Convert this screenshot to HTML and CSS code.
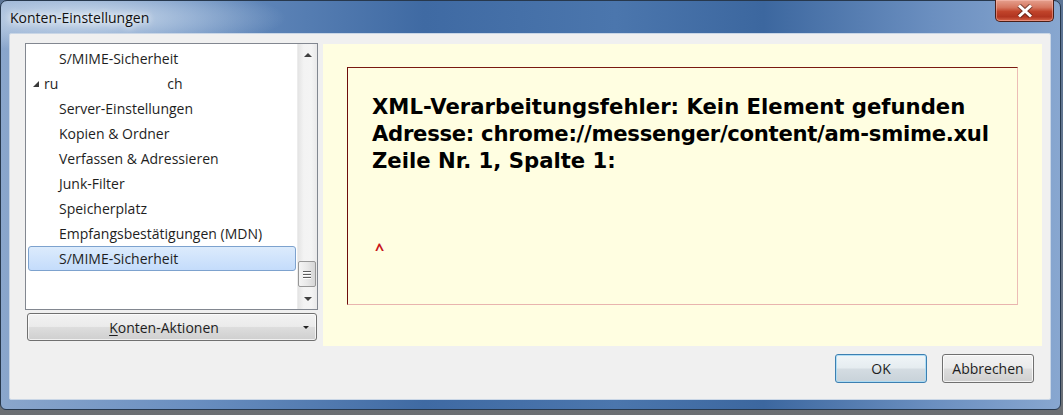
FILE: index.html
```html
<!DOCTYPE html>
<html lang="de">
<head>
<meta charset="utf-8">
<title>Konten-Einstellungen</title>
<link rel="stylesheet" href="styles.css">
</head>
<body>
<div class="screen">
  <div class="window">
    <div class="titlebar">
      <span class="title">Konten-Einstellungen</span>
      <button class="close" aria-label="Schließen">
        <svg width="18" height="14" viewBox="0 0 18 14">
          <path d="M3 1.5 L15 12.5 M15 1.5 L3 12.5" stroke="#3b1a14" stroke-width="5" stroke-linecap="butt" opacity="0.55"/>
          <path d="M3 1.5 L15 12.5 M15 1.5 L3 12.5" stroke="#ffffff" stroke-width="3"/>
        </svg>
      </button>
    </div>
    <div class="client">
      <div class="main">
        <div class="leftcol">
          <div class="tree">
            <div class="rows">
              <div class="row">S/MIME-Sicherheit</div>
              <div class="row account"><span class="twisty"></span>ru<span class="redact"></span>ch</div>
              <div class="row">Server-Einstellungen</div>
              <div class="row">Kopien &amp; Ordner</div>
              <div class="row">Verfassen &amp; Adressieren</div>
              <div class="row">Junk-Filter</div>
              <div class="row">Speicherplatz</div>
              <div class="row">Empfangsbestätigungen (MDN)</div>
              <div class="row selected">S/MIME-Sicherheit</div>
            </div>
            <div class="scrollbar">
              <div class="sb-btn sb-up"><span class="arrow-up"></span></div>
              <div class="sb-track">
                <div class="thumb"><span class="grip"></span><span class="grip"></span><span class="grip"></span></div>
              </div>
              <div class="sb-btn sb-down"><span class="arrow-down"></span></div>
            </div>
          </div>
          <button class="actions"><span class="actions-label"><u>K</u>onten-Aktionen</span><span class="drop"></span></button>
        </div>
        <div class="panel">
          <div class="errorbox">
            <div class="errtext">XML-Verarbeitungsfehler: Kein Element gefunden</div>
            <div class="errtext tight">Adresse: chrome://messenger/content/am-smime.xul</div>
            <div class="errtext">Zeile Nr. 1, Spalte 1:</div>
            <div class="caret">^</div>
          </div>
        </div>
      </div>
      <div class="footer">
        <button class="btn default">OK</button>
        <button class="btn">Abbrechen</button>
      </div>
    </div>
  </div>
</div>
</body>
</html>
```

FILE: styles.css
```css
* { box-sizing: border-box; }
html, body { margin: 0; padding: 0; }
body {
  width: 1063px;
  height: 415px;
  overflow: hidden;
  font-family: "Open Sans", "DejaVu Sans", sans-serif;
}
.screen {
  width: 1063px;
  height: 415px;
  background: linear-gradient(180deg, #5c7596 0%, #6a7686 80%, #6c6f73 100%);
}
.window {
  width: 1061px;
  height: 410px;
  border: 1px solid #27384d;
  border-radius: 7px 7px 6px 6px;
  padding: 0 9px 9px 8px;
  background:
    radial-gradient(ellipse 200px 34px at 85px 17px, rgba(215,228,242,0.9), rgba(215,228,242,0) 100%),
    linear-gradient(90deg, #8aa6cc 0%, #6a8fc0 18%, #3f6aa3 40%, #4b76ad 58%, #3c679f 72%, #6b8fc0 88%, #88a7d0 100%);
  display: flex;
  flex-direction: column;
}
.titlebar {
  height: 32px;
  display: flex;
  justify-content: space-between;
  align-items: flex-start;
}
.title {
  margin: 8px 0 0 1px;
  font-size: 14px;
  line-height: 18px;
  color: #111;
  text-shadow: 0 0 6px #fff, 0 0 10px rgba(255,255,255,0.8);
}
.close {
  width: 59px;
  height: 22px;
  margin: -1px -3px 0 0;
  padding: 0;
  border: 1px solid #4a1e18;
  border-top: none;
  border-radius: 0 0 5px 5px;
  background: linear-gradient(180deg, #e5a08e 0%, #d67760 35%, #c0432a 55%, #b13520 80%, #d7664a 100%);
  box-shadow: inset 0 0 0 1px rgba(255,200,190,0.45);
  display: flex;
  align-items: center;
  justify-content: center;
}
.close svg { display: block; }
.client {
  flex: 1;
  background: #f0f0f0;
  border: 1px solid #c9d6e6;
  border-radius: 2px;
  padding: 9px 8px 0 15px;
  display: flex;
  flex-direction: column;
}
.main {
  display: grid;
  grid-template-columns: 293px minmax(0, 1fr);
  column-gap: 5px;
  height: 303px;
}
.leftcol {
  display: flex;
  flex-direction: column;
  gap: 3px;
}
.tree {
  height: 267px;
  border: 1px solid #828790;
  background: #fff;
  display: grid;
  grid-template-columns: 1fr 20px;
}
.rows {
  padding-top: 2px;
  font-size: 14px;
  color: #1e1e1e;
}
.row {
  height: 25px;
  line-height: 23px;
  margin: 0 1px 0 2px;
  border: 1px solid transparent;
  border-radius: 3px;
  padding-left: 30px;
  white-space: nowrap;
}
.row.account {
  padding-left: 3px;
  display: flex;
  align-items: center;
}
.twisty {
  width: 0;
  height: 0;
  border-style: solid;
  border-width: 0 0 6px 6px;
  border-color: transparent transparent #3a3a3a transparent;
  margin: 1px 5px 0 1px;
}
.redact {
  display: inline-block;
  width: 109px;
  height: 23px;
  background: #fff;
}
.row.selected {
  border-color: #7da2ce;
  background: linear-gradient(180deg, #dcebfc 0%, #c4dcfb 100%);
}
.scrollbar {
  display: flex;
  flex-direction: column;
  background: linear-gradient(90deg, #e4e4e4 0%, #f3f3f3 30%, #f4f4f4 70%, #e9e9e9 100%);
  border-left: 1px solid #ececec;
}
.sb-btn {
  display: flex;
  align-items: center;
  justify-content: center;
}
.sb-up { height: 22px; }
.sb-down { height: 21px; }
.arrow-up {
  width: 0; height: 0;
  border-left: 4px solid transparent;
  border-right: 4px solid transparent;
  border-bottom: 4px solid #404040;
}
.arrow-down {
  width: 0; height: 0;
  border-left: 4px solid transparent;
  border-right: 4px solid transparent;
  border-top: 4px solid #404040;
}
.sb-track {
  flex: 1;
  display: flex;
  flex-direction: column;
  justify-content: flex-end;
  padding-bottom: 1px;
}
.thumb {
  height: 26px;
  margin: 0 1px 0 0;
  border: 1px solid #979797;
  border-radius: 2px;
  background: linear-gradient(90deg, #f4f4f4 0%, #e8e8e8 50%, #d6d6d6 100%);
  display: flex;
  flex-direction: column;
  justify-content: center;
  align-items: center;
  gap: 2px;
}
.grip {
  width: 8px;
  height: 1px;
  background: #5e5e5e;
  box-shadow: 0 1px 0 #fff;
}
.actions {
  height: 28px;
  margin: 0 1px 0 2px;
  padding: 0;
  border: 1px solid #707070;
  border-radius: 3px;
  background: linear-gradient(180deg, #f3f3f3 0%, #ebebeb 48%, #dddddd 52%, #cfcfcf 100%);
  box-shadow: inset 0 0 0 1px rgba(255,255,255,0.7);
  display: flex;
  align-items: center;
  font-family: "Open Sans", "DejaVu Sans", sans-serif;
  font-size: 14px;
  color: #1e1e1e;
}
.actions-label {
  flex: 1;
  text-align: center;
  padding-left: 2px;
}
.actions-label u { text-underline-offset: 2px; }
.drop {
  width: 18px;
  display: flex;
  justify-content: center;
}
.drop::before {
  content: "";
  border-left: 3px solid transparent;
  border-right: 3px solid transparent;
  border-top: 3px solid #222;
  margin-right: 3px;
}
.panel {
  margin-top: 1px;
  height: 302px;
  background: #fffee1;
  padding: 23px 24px;
  min-width: 0;
}
.errorbox {
  height: 238px;
  border-top: 1px solid #7a1a10;
  border-left: 1px solid #6e0c0c;
  border-right: 1px solid #ecbcb6;
  border-bottom: 1px solid #e8b4ae;
  padding: 25px 24px 0 24px;
}
.errtext {
  font-family: "DejaVu Sans", "Verdana", sans-serif;
  font-weight: 700;
  font-size: 21.2px;
  line-height: 27px;
  color: #000;
  white-space: nowrap;
}
.errtext.tight { letter-spacing: -0.3px; }
.caret {
  margin-top: 65px;
  margin-left: 3px;
  font-family: "Open Sans", sans-serif;
  font-weight: 700;
  font-size: 16px;
  line-height: 20px;
  color: #c8141a;
}
.footer {
  display: flex;
  justify-content: flex-end;
  gap: 15px;
  margin-top: 8px;
  padding-right: 8px;
}
.btn {
  width: 92px;
  height: 29px;
  padding: 0;
  border: 1px solid #707070;
  border-radius: 3px;
  background: linear-gradient(180deg, #f2f2f2 0%, #ebebeb 48%, #dddddd 52%, #cfcfcf 100%);
  box-shadow: inset 0 0 0 1px rgba(255,255,255,0.75);
  font-family: "Open Sans", "DejaVu Sans", sans-serif;
  font-size: 14px;
  color: #1e1e1e;
}
.btn.default {
  border-color: #3c7fb1;
  box-shadow: inset 0 0 0 1px rgba(170,220,245,0.9);
  background: linear-gradient(180deg, #f0f5f8 0%, #e5ecf0 48%, #d4dce2 52%, #c8d2d9 100%);
}
```
